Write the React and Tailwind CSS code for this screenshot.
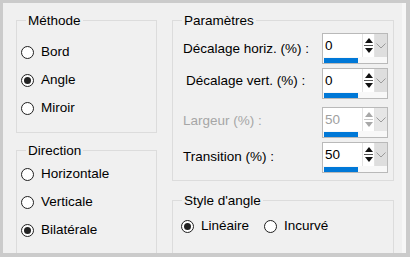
import React from 'react';

const font = { fontFamily: '"Liberation Sans", Arial, sans-serif' };

const Radio = ({ checked, label, className = '' }) => (
  <div className={`flex items-center ${className}`}>
    <span className="w-[13px] h-[13px] rounded-full border border-[#1f1f1f] bg-white flex items-center justify-center shrink-0">
      {checked && <span className="w-[7px] h-[7px] rounded-full bg-[#222222]"></span>}
    </span>
    <span className="ml-[7px]">{label}</span>
  </div>
);

const Group = ({ title, className = '', children }) => (
  <div className={`relative border border-[#dcdcdc] ${className}`}>
    <span className="absolute -top-[7px] left-[9px] px-[2px] leading-[14px] bg-[#f0f0f0]">{title}</span>
    {children}
  </div>
);

const Spin = ({ value, disabled }) => (
  <div className="w-[66px] h-[31px] border border-[#b9b9b9] bg-[#f8f8f8] flex flex-col">
    <div className="flex h-[23px]">
      <div className={`w-[39px] bg-white pl-[2px] leading-[23px] ${disabled ? 'text-[#a0a0a0]' : 'text-black'}`}>{value}</div>
      <div className="w-[13px] bg-white flex flex-col items-center justify-center gap-[2px] border-x border-[#e3e3e3]">
        <svg width="8" height="5" viewBox="0 0 8 5">
          <path d="M0 5 L4 0 L8 5 Z" fill={disabled ? '#a8a8a8' : '#111'} />
        </svg>
        <span className={`w-[9px] h-px ${disabled ? 'bg-[#c8c8c8]' : 'bg-[#555]'}`}></span>
        <svg width="8" height="5" viewBox="0 0 8 5">
          <path d="M0 0 L8 0 L4 5 Z" fill={disabled ? '#a8a8a8' : '#111'} />
        </svg>
      </div>
      <div className={`flex-1 flex items-center justify-center ${disabled ? 'bg-[#e6e6e6]' : 'bg-[#dedede]'}`}>
        <svg width="10" height="6" viewBox="0 0 10 6">
          <path d="M0.5 0.5 L5 5 L9.5 0.5" fill="none" stroke="#9a9a9a" strokeWidth="1" />
        </svg>
      </div>
    </div>
    <div className="h-[6px] pl-px pt-px">
      <div className="w-[34px] h-[5px] bg-[#0078d7]"></div>
    </div>
  </div>
);

export default function App() {
  return (
    <div className="w-[410px] h-[257px] bg-[#cbcbcb] pt-[3px] pl-[3px] overflow-hidden text-[13.5px] text-black" style={font}>
      <div className="w-[403px] h-[250px] bg-[#f0f0f0] border-r-[4px] border-[#f7f7f7] flex pl-[13px] pt-[17px] overflow-hidden">
        <div className="w-[141px] flex flex-col shrink-0">
          <Group title="Méthode" className="h-[113px] shrink-0">
            <div className="pl-[4px] pt-[17px]">
              <Radio label="Bord" className="h-[28px]" />
              <Radio label="Angle" checked className="h-[28px]" />
              <Radio label="Miroir" className="h-[28px]" />
            </div>
          </Group>
          <Group title="Direction" className="mt-[17px] h-[120px] shrink-0">
            <div className="pl-[4px] pt-[9px]">
              <Radio label="Horizontale" className="h-[28px]" />
              <Radio label="Verticale" className="h-[28px]" />
              <Radio label="Bilatérale" checked className="h-[28px]" />
            </div>
          </Group>
        </div>
        <div className="ml-[15px] w-[222px] flex flex-col shrink-0">
          <Group title="Paramètres" className="h-[161px] shrink-0">
            <div className="flex flex-col pl-[10px] pr-[5px] pt-[12px]">
              <div className="flex items-start justify-between h-[30px]">
                <span className="mt-[6px]">Décalage horiz. (%) :</span>
                <Spin value="0" />
              </div>
              <div className="flex items-start justify-between h-[30px] mt-[5px]">
                <span className="mt-[3px] ml-[3px]">Décalage vert. (%) :</span>
                <Spin value="0" />
              </div>
              <div className="flex items-start justify-between h-[30px] mt-[9px]">
                <span className="mt-[4px] text-[#a6a6a6]">Largeur (%) :</span>
                <Spin value="50" disabled />
              </div>
              <div className="flex items-start justify-between h-[30px] mt-[5px]">
                <span className="mt-[5px]">Transition (%) :</span>
                <Spin value="50" />
              </div>
            </div>
          </Group>
          <Group title="Style d'angle" className="mt-[19px] h-[80px] shrink-0">
            <div className="flex pl-[8px] pt-[11px] h-[39px]">
              <Radio label="Linéaire" checked />
              <Radio label="Incurvé" className="ml-[15px]" />
            </div>
          </Group>
        </div>
      </div>
    </div>
  );
}
